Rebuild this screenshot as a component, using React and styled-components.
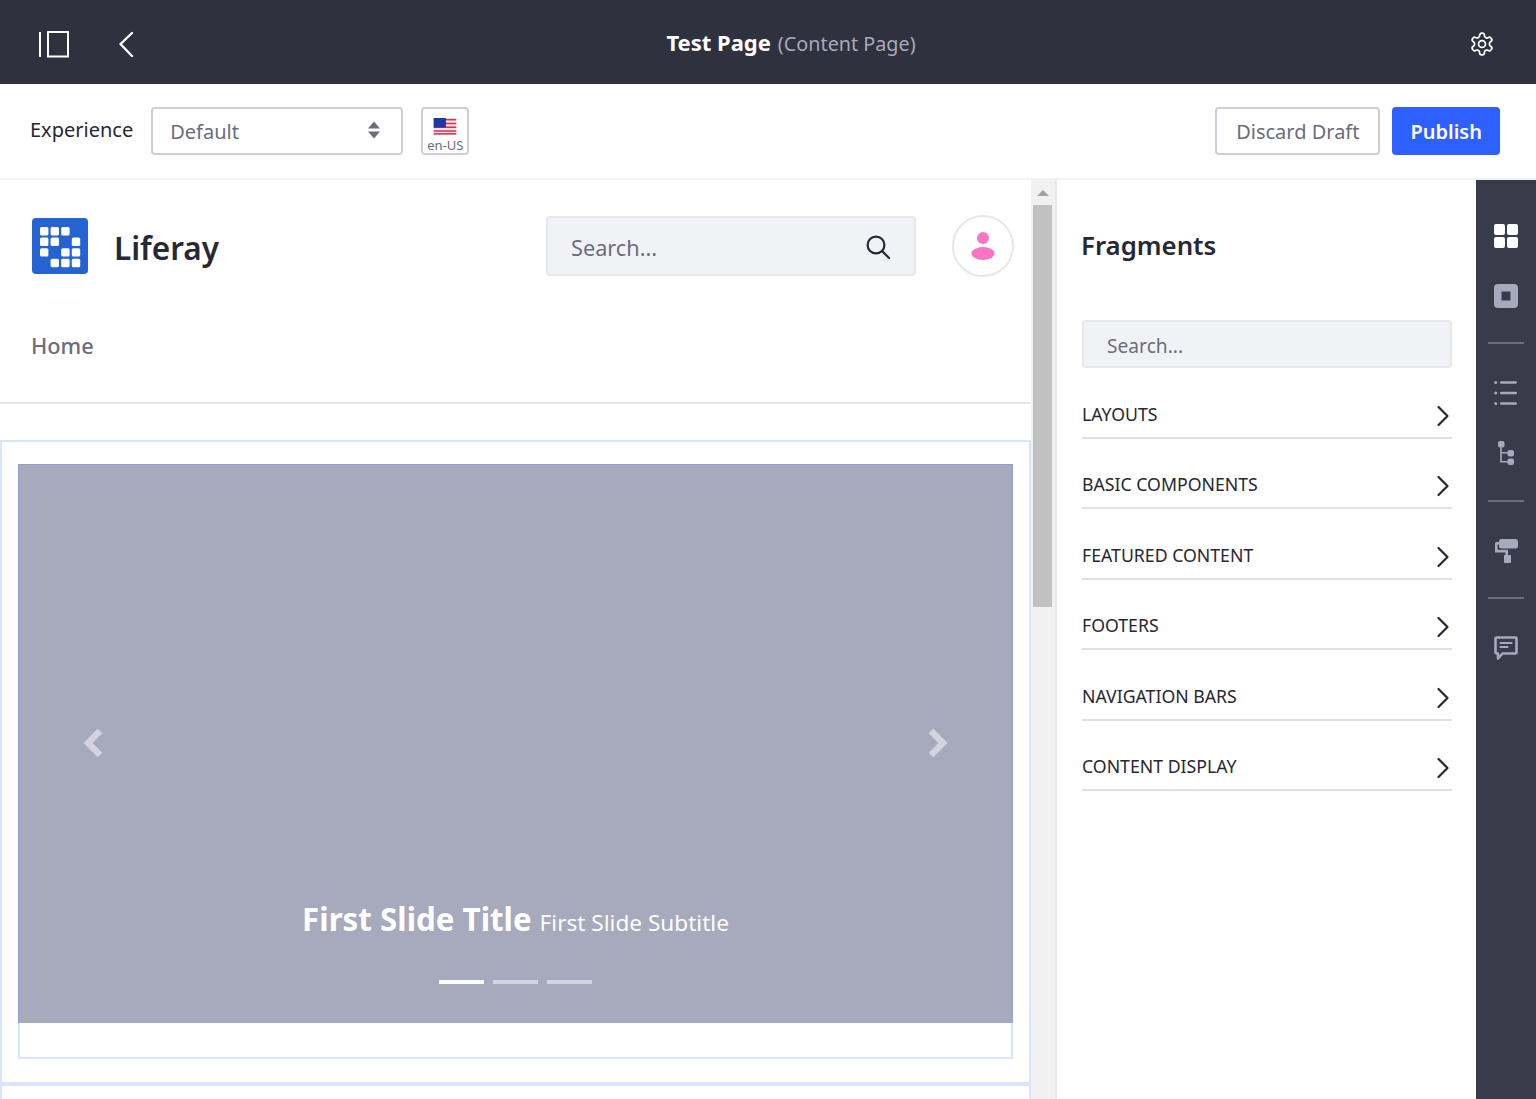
import React from 'react';
import styled, { createGlobalStyle } from 'styled-components';

const Global = createGlobalStyle`
  html, body { margin: 0; padding: 0; height: 100%; overflow: hidden; background: #fff; }
  * { box-sizing: border-box; }
  body { font-family: 'Noto Sans', 'Open Sans', sans-serif; color: #272833; }
`;

const Page = styled.div`
  height: 1099px;
  display: flex;
  flex-direction: column;
  overflow: hidden;
`;

const TopBar = styled.header`
  height: 84px;
  flex: none;
  background: #30313f;
  display: grid;
  grid-template-columns: 1fr auto 1fr;
  align-items: center;
  padding: 4px 41px 0 38px;
  color: #fff;
`;

const TopLeft = styled.div`
  display: flex;
  align-items: center;
  gap: 48px;
`;

const TopTitle = styled.div`
  font-size: 22px;
  font-weight: 700;
  white-space: nowrap;
  margin-left: 49px;
  margin-top: -5px;
  small {
    font-size: 19.8px;
    font-weight: 400;
    color: #a7a9bc;
    margin-left: 7px;
  }
`;

const TopRight = styled.div`
  display: flex;
  justify-content: flex-end;
`;

const Toolbar = styled.div`
  height: 96px;
  flex: none;
  border-bottom: 2px solid #f1f2f5;
  display: flex;
  align-items: center;
  padding: 0 36px 0 30px;
`;

const ToolLabel = styled.span`
  font-size: 20px;
  margin-right: 18px;
  margin-top: -3px;
`;

const SelectBox = styled.div`
  width: 252px;
  height: 48px;
  border: 2px solid #cdced9;
  border-radius: 4px;
  display: flex;
  align-items: center;
  justify-content: space-between;
  padding: 0 21px 0 17px;
  font-size: 20px;
  color: #6b6c7e;
  svg { margin-top: -2px; }
`;

const LocaleButton = styled.div`
  width: 48px;
  height: 48px;
  margin-left: 18px;
  border: 2px solid #cdced9;
  border-radius: 4px;
  display: flex;
  flex-direction: column;
  align-items: center;
  padding-top: 9px;
  font-size: 13px;
  line-height: 16px;
  color: #6b6c7e;
  gap: 2px;
`;

const Spacer = styled.div`
  flex: 1;
`;

const Button = styled.button`
  height: 48px;
  border-radius: 4px;
  font-family: inherit;
  font-size: 20px;
  padding: 0 ${p => (p.$primary ? '16px' : '19px')};
  border: 2px solid ${p => (p.$primary ? '#2e5fff' : '#cdced9')};
  background: ${p => (p.$primary ? '#2e5fff' : '#fff')};
  color: ${p => (p.$primary ? '#fff' : '#6b6c7e')};
  font-weight: ${p => (p.$primary ? 600 : 400)};
  margin-left: ${p => (p.$primary ? '12px' : '0')};
`;

const Body = styled.div`
  flex: 1;
  min-height: 0;
  display: flex;
`;

const Canvas = styled.main`
  width: 1031px;
  flex: none;
  overflow: hidden;
`;

const SiteHeader = styled.div`
  height: 224px;
  border-bottom: 2px solid #e7e7ed;
  padding: 35px 17px 0 32px;
`;

const BrandRow = styled.div`
  display: flex;
  align-items: center;
  height: 62px;
`;

const BrandName = styled.span`
  font-size: 31.5px;
  font-weight: 600;
  margin-left: 26px;
  padding-top: 2px;
  flex: 1;
`;

const SiteSearch = styled.div`
  width: 370px;
  height: 60px;
  background: #f1f2f5;
  border: 2px solid #e7e7ed;
  border-radius: 4px;
  display: flex;
  align-items: center;
  justify-content: space-between;
  padding: 2px 23px 0 23px;
  font-size: 21.7px;
  color: #6b6c7e;
`;

const Avatar = styled.div`
  width: 62px;
  height: 62px;
  margin-left: 36px;
  border: 2px solid #e7e7ed;
  border-radius: 50%;
  display: flex;
  align-items: center;
  justify-content: center;
`;

const HomeLink = styled.div`
  margin: 54px 0 0 -1px;
  font-size: 21.8px;
  font-weight: 500;
  color: #6b6c7e;
`;

const Fragment = styled.section`
  margin-top: 36px;
  height: 644px;
  border: 2px solid #dbe4ff;
  padding: 22px 16px 0;
`;

const SliderFrame = styled.div`
  height: 595px;
  border: 2px solid #dbe4ff;
  border-top: 0;
`;

const Slide = styled.div`
  height: 559px;
  margin: 0 -2px;
  background: #a7a9bc;
  border: 1px solid #969bd0;
  border-bottom: 0;
  display: flex;
  flex-direction: column;
  align-items: center;
  padding-top: 433px;
  color: #fff;
  position: relative;
`;

const SlideArrow = styled.span`
  position: absolute;
  top: 263px;
  ${p => (p.$right ? 'right: 63px;' : 'left: 63px;')}
  display: flex;
`;

const SlideCaption = styled.div`
  display: flex;
  align-items: baseline;
  gap: 8px;
  height: 46px;
  strong {
    font-size: 31.3px;
    font-weight: 700;
  }
  span {
    font-size: 22.6px;
  }
`;

const Dots = styled.div`
  display: flex;
  gap: 9px;
  margin-top: 36px;
`;

const Dot = styled.i`
  display: block;
  width: 45px;
  height: 4px;
  background: #fff;
  opacity: ${p => (p.$active ? 1 : 0.5)};
`;

const NextFragment = styled.div`
  height: 60px;
  margin-top: -1px;
  border: 2px solid #dbe4ff;
  border-top-width: 3px;
`;

const Scrollbar = styled.div`
  width: 26px;
  flex: none;
  background: #f1f1f1;
  border-right: 2px solid #e7e7ed;
  padding: 0 3px 0 2px;
`;

const ScrollArrow = styled.div`
  height: 25px;
  display: flex;
  align-items: center;
  justify-content: center;
  &::before {
    content: '';
    border-left: 6px solid transparent;
    border-right: 6px solid transparent;
    border-bottom: 6px solid #a3a3a3;
  }
`;

const ScrollThumb = styled.div`
  height: 402px;
  background: #c1c1c1;
`;

const Panel = styled.aside`
  width: 419px;
  flex: none;
  padding: 45px 24px 0 25px;
`;

const PanelTitle = styled.h2`
  margin: 0 0 0 -1px;
  font-size: 25.8px;
  line-height: 40px;
  font-weight: 600;
`;

const PanelSearch = styled.div`
  margin-top: 55px;
  height: 48px;
  background: #f1f2f5;
  border: 2px solid #e7e7ed;
  border-radius: 4px;
  display: flex;
  align-items: center;
  padding: 2px 0 0 23px;
  font-size: 19.2px;
  color: #6b6c7e;
`;

const Category = styled.div`
  height: 70.5px;
  display: flex;
  align-items: flex-end;
  justify-content: space-between;
  border-bottom: 2px solid #dfe0e8;
  padding-bottom: 10px;
  font-size: 17.7px;
  line-height: 26px;
  color: #272833;
  svg { margin: 0 2px 0 0; }
`;

const Rail = styled.nav`
  width: 60px;
  flex: none;
  background: #393a4a;
  display: flex;
  flex-direction: column;
  align-items: center;
  padding-top: 44px;
`;

const RailIcon = styled.div`
  width: 24px;
  height: 24px;
  margin-bottom: ${p => p.$gap}px;
  display: flex;
`;

const RailRule = styled.div`
  width: 36px;
  height: 2px;
  background: #6b6c7e;
  margin-bottom: ${p => p.$gap}px;
`;

const PanelIcon = () => (
  <svg width="32" height="28" viewBox="0 0 32 28" fill="none" stroke="#fff" strokeWidth="2">
    <path d="M2 2v25" />
    <rect x="10" y="2" width="20" height="24.5" />
  </svg>
);

const BackIcon = () => (
  <svg width="16" height="26" viewBox="0 0 16 26" fill="none" stroke="#fff" strokeWidth="2.4" strokeLinecap="round" strokeLinejoin="round">
    <path d="M14 2 2.5 13 14 25" />
  </svg>
);

const GearIcon = () => (
  <svg width="26" height="26" viewBox="0 0 24 24" fill="none" stroke="#fff" strokeWidth="1.6" strokeLinecap="round" strokeLinejoin="round">
    <circle cx="12" cy="12" r="3.2" />
    <path d="M12.22 2h-.44a2 2 0 0 0-2 2v.18a2 2 0 0 1-1 1.73l-.43.25a2 2 0 0 1-2 0l-.15-.08a2 2 0 0 0-2.73.73l-.22.38a2 2 0 0 0 .73 2.73l.15.1a2 2 0 0 1 1 1.72v.51a2 2 0 0 1-1 1.74l-.15.09a2 2 0 0 0-.73 2.73l.22.38a2 2 0 0 0 2.73.73l.15-.08a2 2 0 0 1 2 0l.43.25a2 2 0 0 1 1 1.73V20a2 2 0 0 0 2 2h.44a2 2 0 0 0 2-2v-.18a2 2 0 0 1 1-1.73l.43-.25a2 2 0 0 1 2 0l.15.08a2 2 0 0 0 2.73-.73l.22-.39a2 2 0 0 0-.73-2.73l-.15-.08a2 2 0 0 1-1-1.74v-.5a2 2 0 0 1 1-1.74l.15-.09a2 2 0 0 0 .73-2.73l-.22-.38a2 2 0 0 0-2.73-.73l-.15.08a2 2 0 0 1-2 0l-.43-.25a2 2 0 0 1-1-1.73V4a2 2 0 0 0-2-2z" />
  </svg>
);

const Carets = () => (
  <svg width="12" height="18" viewBox="0 0 12 18" fill="#6b6c7e">
    <path d="M6 0.5 12 7.5H0z" />
    <path d="M6 17.5 12 10.5H0z" />
  </svg>
);

const Flag = () => (
  <svg width="24" height="18" viewBox="0 0 24 18">
    <rect width="24" height="18" fill="#e9e4ea" />
    {[2, 6, 10, 14, 17].map(y => (
      <rect key={y} y={y - 1} width="24" height="1.6" fill="#d8314a" />
    ))}
    <rect width="13" height="10" fill="#1b3aa5" />
  </svg>
);

const LiferayLogo = () => {
  const cells = [
    [0, 0], [1, 0], [2, 0],
    [0, 1], [1, 1], [3, 1],
    [0, 2], [2, 2], [3, 2],
    [1, 3], [2, 3], [3, 3],
  ];
  return (
    <svg width="56" height="56" viewBox="0 0 56 56">
      <rect width="56" height="56" rx="4" fill="#2463d1" />
      {cells.map(([c, r]) => (
        <rect key={`${c}-${r}`} x={8 + c * 10.6} y={9 + r * 10.6} width="8.4" height="8.4" rx="1.5" fill="#fff" />
      ))}
    </svg>
  );
};

const SearchIcon = () => (
  <svg width="26" height="26" viewBox="0 0 26 26" fill="none" stroke="#272833" strokeWidth="2.2" strokeLinecap="round">
    <circle cx="11" cy="11" r="8.4" />
    <path d="M17.4 17.4 24 24" />
  </svg>
);

const UserIcon = () => (
  <svg width="24" height="28" viewBox="0 0 24 28" fill="#f875c6">
    <circle cx="12" cy="6" r="6" />
    <ellipse cx="12" cy="21.5" rx="11.6" ry="6.5" />
  </svg>
);

const SlideChevron = ({ right }) => (
  <svg width="22" height="30" viewBox="0 0 22 30" fill="none" stroke="#d3d4de" strokeWidth="6.5">
    <path d={right ? 'M4 3l12 12L4 27' : 'M18 3 6 15l12 12'} />
  </svg>
);

const RowChevron = () => (
  <svg width="14" height="22" viewBox="0 0 14 22" fill="none" stroke="#272833" strokeWidth="2.2" strokeLinecap="round" strokeLinejoin="round">
    <path d="M2.5 2 11.5 11 2.5 20" />
  </svg>
);

const GridIcon = () => (
  <svg viewBox="0 0 24 24" fill="#fff">
    <rect width="11" height="11" rx="2" />
    <rect x="13" width="11" height="11" rx="2" />
    <rect y="13" width="11" height="11" rx="2" />
    <rect x="13" y="13" width="11" height="11" rx="2" />
  </svg>
);

const BlockIcon = () => (
  <svg viewBox="0 0 24 24">
    <rect width="24" height="24" rx="4" fill="#a7a9bc" />
    <rect x="7.5" y="7.5" width="9" height="9" fill="#393a4a" />
  </svg>
);

const ListIcon = () => (
  <svg viewBox="0 0 24 24" fill="#a7a9bc">
    <circle cx="1.7" cy="1.5" r="1.5" />
    <circle cx="1.7" cy="12" r="1.5" />
    <circle cx="1.7" cy="22.5" r="1.5" />
    <rect x="6" y="0.2" width="17" height="2.6" rx="1.3" />
    <rect x="6" y="10.7" width="17" height="2.6" rx="1.3" />
    <rect x="6" y="21.2" width="17" height="2.6" rx="1.3" />
  </svg>
);

const TreeIcon = () => (
  <svg viewBox="0 0 24 24" fill="#a7a9bc">
    <rect x="4" y="0" width="6.5" height="6.5" rx="2" />
    <rect x="13.5" y="9" width="6.5" height="6.5" rx="2" />
    <rect x="13.5" y="17.5" width="6.5" height="6.5" rx="2" />
    <path d="M6.2 4h1.6v7H15v1.6H7.8V20H15v1.6H6.2z" />
  </svg>
);

const RollerIcon = () => (
  <svg viewBox="0 0 24 24" fill="#a7a9bc">
    <rect x="5" y="0" width="19" height="9.5" rx="2.5" />
    <path d="M3.5 3H5v2.6H3.6v5.2H14V16h-2.6v-2.6H1V4.5A1.5 1.5 0 0 1 2.5 3z" />
    <rect x="10" y="16" width="7" height="8" rx="1" />
  </svg>
);

const CommentIcon = () => (
  <svg viewBox="0 0 24 24" fill="none" stroke="#a7a9bc" strokeWidth="2.6" strokeLinejoin="round" strokeLinecap="round">
    <path d="M2.5 1.5h19a1 1 0 0 1 1 1v14a1 1 0 0 1-1 1H8.5L4 22.5v-5H2.5a1 1 0 0 1-1-1v-14a1 1 0 0 1 1-1z" />
    <path d="M6.5 7h11M6.5 11h7" strokeWidth="2.2" />
  </svg>
);

const categories = ['LAYOUTS', 'BASIC COMPONENTS', 'FEATURED CONTENT', 'FOOTERS', 'NAVIGATION BARS', 'CONTENT DISPLAY'];

export default function App() {
  return (
    <Page>
      <Global />
      <TopBar>
        <TopLeft>
          <PanelIcon />
          <BackIcon />
        </TopLeft>
        <TopTitle>
          Test Page<small>(Content Page)</small>
        </TopTitle>
        <TopRight>
          <GearIcon />
        </TopRight>
      </TopBar>

      <Toolbar>
        <ToolLabel>Experience</ToolLabel>
        <SelectBox>
          Default
          <Carets />
        </SelectBox>
        <LocaleButton>
          <Flag />
          en-US
        </LocaleButton>
        <Spacer />
        <Button>Discard Draft</Button>
        <Button $primary>Publish</Button>
      </Toolbar>

      <Body>
        <Canvas>
          <SiteHeader>
            <BrandRow>
              <LiferayLogo />
              <BrandName>Liferay</BrandName>
              <SiteSearch>
                Search...
                <SearchIcon />
              </SiteSearch>
              <Avatar>
                <UserIcon />
              </Avatar>
            </BrandRow>
            <HomeLink>Home</HomeLink>
          </SiteHeader>
          <Fragment>
            <SliderFrame>
              <Slide>
                <SlideArrow>
                  <SlideChevron />
                </SlideArrow>
                <SlideArrow $right>
                  <SlideChevron right />
                </SlideArrow>
                <SlideCaption>
                  <strong>First Slide Title</strong>
                  <span>First Slide Subtitle</span>
                </SlideCaption>
                <Dots>
                  <Dot $active />
                  <Dot />
                  <Dot />
                </Dots>
              </Slide>
            </SliderFrame>
          </Fragment>
          <NextFragment />
        </Canvas>

        <Scrollbar>
          <ScrollArrow />
          <ScrollThumb />
        </Scrollbar>

        <Panel>
          <PanelTitle>Fragments</PanelTitle>
          <PanelSearch>Search...</PanelSearch>
          {categories.map(name => (
            <Category key={name}>
              {name}
              <RowChevron />
            </Category>
          ))}
        </Panel>

        <Rail>
          <RailIcon $gap={36}><GridIcon /></RailIcon>
          <RailIcon $gap={34}><BlockIcon /></RailIcon>
          <RailRule $gap={37} />
          <RailIcon $gap={36}><ListIcon /></RailIcon>
          <RailIcon $gap={35}><TreeIcon /></RailIcon>
          <RailRule $gap={37} />
          <RailIcon $gap={34}><RollerIcon /></RailIcon>
          <RailRule $gap={37} />
          <RailIcon $gap={0}><CommentIcon /></RailIcon>
        </Rail>
      </Body>
    </Page>
  );
}
